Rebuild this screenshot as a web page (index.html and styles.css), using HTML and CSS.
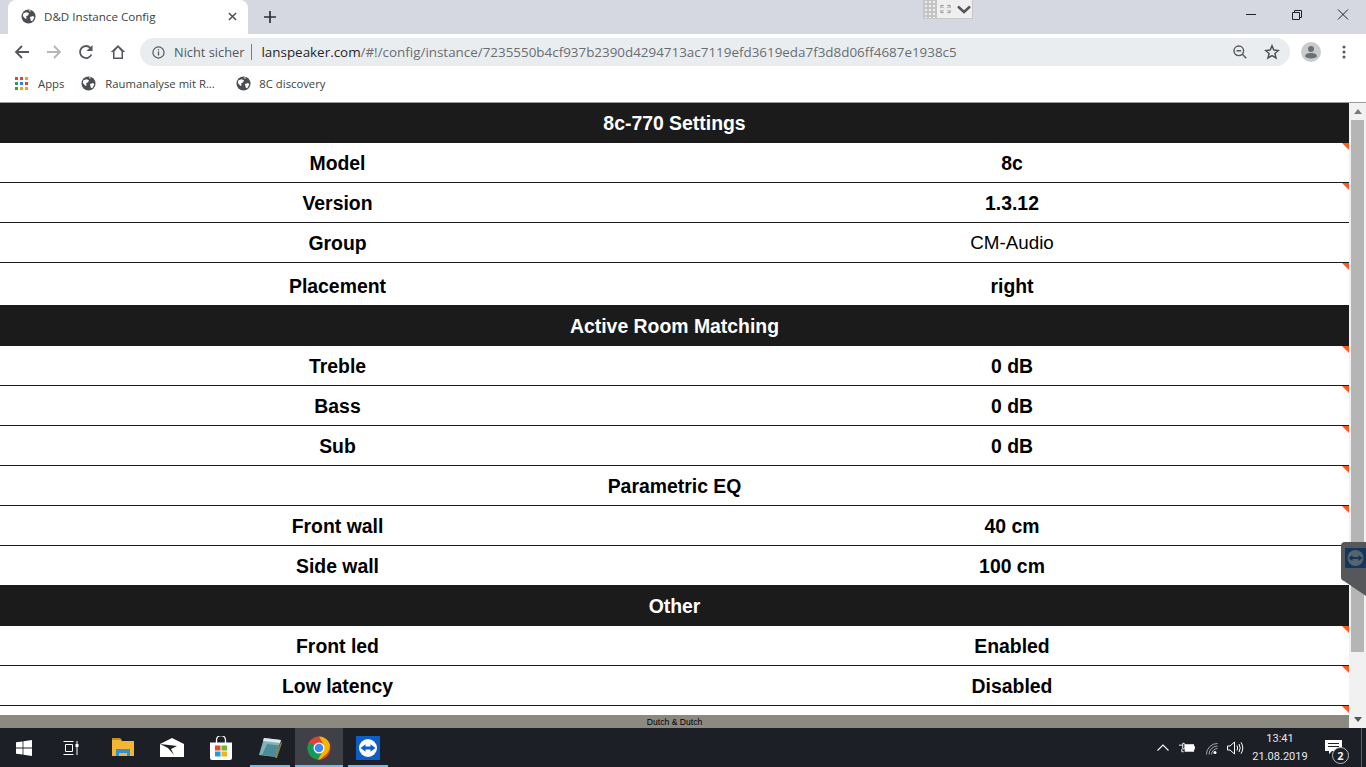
FILE: index.html
```html
<!DOCTYPE html>
<html lang="de">
<head>
<meta charset="utf-8">
<title>D&amp;D Instance Config</title>
<link rel="stylesheet" href="styles.css">
</head>
<body>
<svg class="defs" width="0" height="0">
  <symbol id="globe" viewBox="0 0 16 16">
    <circle cx="8" cy="8" r="7.5" fill="#4a4d52"/>
    <path d="M2.5 4.5 6 3.5l2.5 1-1 2.5-2 .5.5 2.5-1.5 .5-2.5-3zM9.5 8.5l3.5-1 1.2 1.5-2.2 4-1.500-.5zM8 1.200l3 .6-1.500 1.200z" fill="#fff"/>
  </symbol>
</svg>

<header class="browser">
  <div class="tabstrip">
    <div class="tab">
      <svg class="ico16"><use href="#globe"/></svg>
      <span class="tab-title">D&amp;D Instance Config</span>
      <svg class="tab-close" viewBox="0 0 10 10"><path d="M1 1l8 8M9 1l-8 8" stroke="#4a4d52" stroke-width="1.600"/></svg>
    </div>
    <svg class="tab-new" viewBox="0 0 12 12"><path d="M6 0v12M0 6h12" stroke="#2e3034" stroke-width="1.700"/></svg>
    <div class="win-btns">
      <svg class="win-btn" viewBox="0 0 46 30"><path d="M18 14.500h10" stroke="#222" fill="none"/></svg>
      <svg class="win-btn" viewBox="0 0 46 30"><path d="M18.500 12.500h7v7h-7zM20.500 12.500v-2h7v7h-2" stroke="#222" fill="none"/></svg>
      <svg class="win-btn" viewBox="0 0 46 30"><path d="M18 9.500l10 10M28 9.500l-10 10" stroke="#222" fill="none"/></svg>
    </div>
  </div>

  <div class="toolbar">
    <svg class="nav" viewBox="0 0 16 16"><path d="M15 8H2M8 2 2 8l6 6" stroke="#54575c" stroke-width="1.800" fill="none"/></svg>
    <svg class="nav" viewBox="0 0 16 16"><path d="M1 8h13M8 2l6 6-6 6" stroke="#b3b5b8" stroke-width="1.800" fill="none"/></svg>
    <svg class="nav" viewBox="0 0 16 16"><path d="M13.500 10.500A6 6 0 1 1 12.500 4" stroke="#54575c" stroke-width="1.800" fill="none"/><path d="M14.500 1v6h-6z" fill="#54575c"/></svg>
    <svg class="nav" viewBox="0 0 16 16"><path d="M8 1 .8 8H3v7h10V8h2.200zM4.500 7.500 8 3.500l3.500 4v6h-7z" fill="#54575c" fill-rule="evenodd"/></svg>
    <div class="omnibox">
      <svg class="info" viewBox="0 0 14 14"><circle cx="7" cy="7" r="6" stroke="#54575c" stroke-width="1.300" fill="none"/><path d="M7 6v4.200M7 3.500v1.400" stroke="#54575c" stroke-width="1.400"/></svg>
      <span class="not-secure">Nicht sicher</span>
      <span class="sep"></span>
      <span class="url"><b class="host">lanspeaker.com</b>/#!/config/instance/7235550b4cf937b2390d4294713ac7119efd3619eda7f3d8d06ff4687e1938c5</span>
      <svg class="zoom-ico" viewBox="0 0 14 14"><circle cx="5.800" cy="5.800" r="4.800" stroke="#54575c" stroke-width="1.400" fill="none"/><path d="M9.300 9.300l4 4M3.500 5.800h4.600" stroke="#54575c" stroke-width="1.400"/></svg>
      <svg class="star" viewBox="0 0 16 16"><path d="M8 1.800l1.800 4.300 4.600.4-3.500 3 1.100 4.500L8 11.600 4 14l1.100-4.500-3.500-3 4.600-.4z" stroke="#4d5055" stroke-width="1.500" fill="none"/></svg>
    </div>
    <svg class="avatar" viewBox="0 0 20 20"><circle cx="10" cy="10" r="10" fill="#c9cbce"/><circle cx="10" cy="7" r="3" fill="#6b6e72"/><path d="M4 14.500c0-2.500 3-3.500 6-3.500s6 1 6 3.500c-1.500 1.300-3.500 2-6 2s-4.500-.7-6-2z" fill="#6b6e72"/></svg>
    <svg class="menu" viewBox="0 0 4 14"><circle cx="2" cy="2" r="1.500" fill="#54575c"/><circle cx="2" cy="7" r="1.500" fill="#54575c"/><circle cx="2" cy="12" r="1.500" fill="#54575c"/></svg>
  </div>

  <nav class="bookmarks">
    <svg class="apps" viewBox="0 0 13 13">
      <rect width="3" height="3" fill="#e0452f"/><rect x="5" width="3" height="3" fill="#e0452f"/><rect x="10" width="3" height="3" fill="#f4a400"/>
      <rect y="5" width="3" height="3" fill="#2f9e4a"/><rect x="5" y="5" width="3" height="3" fill="#3b78e7"/><rect x="10" y="5" width="3" height="3" fill="#e0452f"/>
      <rect y="10" width="3" height="3" fill="#2f9e4a"/><rect x="5" y="10" width="3" height="3" fill="#f4a400"/><rect x="10" y="10" width="3" height="3" fill="#f4a400"/>
    </svg>
    <span class="bm-apps">Apps</span>
    <svg class="ico15 bm-g1"><use href="#globe"/></svg>
    <span class="bm-text bm-t1">Raumanalyse mit R...</span>
    <svg class="ico15 bm-g2"><use href="#globe"/></svg>
    <span class="bm-text bm-t2">8C discovery</span>
  </nav>
</header>

<div class="remote-tab">
  <div class="remote-grid"></div>
  <svg class="remote-expand" viewBox="0 0 12 10"><path d="M1 4V1h3M8 1h3v3M1 6v3h3M8 9h3V6M2 2l2 2M10 2 8 4M2 8l2-2M10 8 8 6" stroke="#777" fill="none" stroke-width=".8"/></svg>
  <svg class="remote-chev" viewBox="0 0 14 9"><path d="M1 1.500l6 5.500 6-5.500" stroke="#555" stroke-width="2.400" fill="none"/></svg>
</div>

<div class="viewport">
  <main class="page">
    <div class="row head head-first">8c-770 Settings</div>
    <div class="row line mark"><span>Model</span><span>8c</span></div>
    <div class="row line mark"><span>Version</span><span>1.3.12</span></div>
    <div class="row line row-plain"><span>Group</span><span class="plain">CM-Audio</span></div>
    <div class="row tall mark"><span>Placement</span><span>right</span></div>
    <div class="row head head-tall">Active Room Matching</div>
    <div class="row line mark"><span>Treble</span><span>0 dB</span></div>
    <div class="row line mark"><span>Bass</span><span>0 dB</span></div>
    <div class="row line mark"><span>Sub</span><span>0 dB</span></div>
    <div class="row line mark span-row">Parametric EQ</div>
    <div class="row line mark"><span>Front wall</span><span>40 cm</span></div>
    <div class="row short mark"><span>Side wall</span><span>100 cm</span></div>
    <div class="row head head-tall">Other</div>
    <div class="row line mark"><span>Front led</span><span>Enabled</span></div>
    <div class="row line mark"><span>Low latency</span><span>Disabled</span></div>
    <div class="row line mark"><span></span><span></span></div>
  </main>

  <aside class="scrollbar">
    <span class="arrow-up"></span>
    <span class="thumb"></span>
    <span class="arrow-down"></span>
  </aside>

  <footer class="page-footer"><span>Dutch &amp; Dutch</span></footer>

  <div class="tv-handle">
    <svg viewBox="0 0 25 54" width="25" height="54">
      <path d="M25 0H4Q0 0 0 4v31q0 3 3 4l22 15z" fill="#56575a"/>
      <rect x="4" y="6" width="21" height="20" rx="1" fill="#12365c"/>
      <circle cx="14.500" cy="16" r="8" fill="#56646f"/>
      <path d="M7.500 16l4-3v2h6v-2l4 3-4 3v-2h-6v2z" fill="#12365c"/>
    </svg>
  </div>
</div>

<footer class="taskbar">
  <svg class="tb-start" viewBox="0 0 16 16"><path d="M0 2.300 6.600 1.400v6.200H0zM7.400 1.300 16 0v7.600H7.400zM0 8.400h6.600v6.200L0 13.700zM7.400 8.400H16V16l-8.600-1.300z" fill="#fff"/></svg>
  <svg class="tb-view" viewBox="0 0 16 16"><path d="M.5 1.500h10M.5 14.500h10M2.500 4.500h7v7h-7zM14 1v14" stroke="#fff" fill="none"/><rect x="12.500" y="4" width="3" height="3" fill="#fff"/></svg>
  <div class="tb-app">
    <svg viewBox="0 0 22 19" width="22" height="19"><path d="M0 1h8l2 2h12v15H0z" fill="#f2b632"/><path d="M0 0h8l2 2H0z" fill="#c98f1a"/><path d="M4 18v-7h14v7h-3v-3H7v3z" fill="#2f8fd8"/></svg>
  </div>
  <div class="tb-app">
    <svg viewBox="0 0 24 19" width="24" height="19"><path d="M0 6 12 0l12 6v13H0z" fill="#fff"/><path d="M0 6l17 2-6 3 3 6-6-7z" fill="#1c1f26"/></svg>
  </div>
  <div class="tb-app">
    <svg viewBox="0 0 24 24" width="24" height="24"><path d="M7.500 7V4a4.500 4.500 0 0 1 9 0v3" stroke="#fff" fill="none" stroke-width="1.300"/><path d="M1 6.500h22V22a2 2 0 0 1-2 2H3a2 2 0 0 1-2-2z" fill="#fff"/><rect x="6" y="9.500" width="5.500" height="5" fill="#e8492b"/><rect x="12.500" y="9.500" width="5.500" height="5" fill="#6fb52e"/><rect x="6" y="15.500" width="5.500" height="5" fill="#1f9be0"/><rect x="12.500" y="15.500" width="5.500" height="5" fill="#f6b21b"/></svg>
  </div>
  <div class="tb-app under">
    <svg viewBox="0 0 24 22" width="24" height="22"><path d="M6 1l17 2-5 17-17-2z" fill="#7fb3b8"/><path d="M6 1l17 2-1 3L5 4z" fill="#dfe8ea"/><path d="M9 7l12 1.500-3.500 11L4 18z" fill="#4d8c96"/><path d="M23 5l1 1-5 15-2 0z" fill="#9a7a3a"/></svg>
  </div>
  <div class="tb-app active under">
    <svg viewBox="0 0 24 24" width="24" height="24"><circle cx="12" cy="12" r="11.500" fill="#db4437"/><path d="M12 12 2 6.500A11.500 11.500 0 0 0 11 23.500l5-8z" fill="#0f9d58"/><path d="M12 .5h0A11.500 11.500 0 0 1 23 8.500l-1 6-2 3-7 6-2 0 6-10.500-1-5.500z" fill="#f4b400"/><circle cx="12" cy="12" r="5.500" fill="#fff"/><circle cx="12" cy="12" r="4.300" fill="#4285f4"/></svg>
  </div>
  <div class="tb-app under">
    <svg viewBox="0 0 24 24" width="24" height="24"><rect width="24" height="24" fill="#0d5fc7"/><circle cx="12" cy="12" r="9" fill="#fff"/><path d="M4.500 12l5-3.800V10.500h5V8.200l5 3.800-5 3.800V13.500h-5v2.300z" fill="#0d5fc7"/></svg>
  </div>
  <div class="tray">
    <svg class="tr-up" viewBox="0 0 12 7"><path d="M.5 6.500 6 1l5.500 5.500" stroke="#fff" fill="none" stroke-width="1.100"/></svg>
    <svg class="tr-batt" viewBox="0 0 17 11"><path d="M0 3h4M4 1v6h1.500q1-1 1-3t-1-3zM3 7v3h2" stroke="#fff" fill="none"/><rect x="6" y="2" width="10" height="8" fill="#fff"/><rect x="16" y="4" width="1" height="3.500" fill="#fff"/></svg>
    <svg class="tr-wifi" viewBox="0 0 14 14"><path d="M.5 13.500A13 13 0 0 1 13.500.5M3.500 13.500A10 10 0 0 1 13.500 3.500M6.500 13.500A7 7 0 0 1 13.500 6.500" stroke="#bfc0c3" fill="none"/><circle cx="10.500" cy="11" r="1.800" fill="#fff"/></svg>
    <svg class="tr-vol" viewBox="0 0 17 14"><path d="M.5 5h2.500L7.500 1v12L3 9H.5zM10 4.500q1.300 2.500 0 5M12 3q2.400 4 0 8M14 1.300q3.600 5.700 0 11.400" stroke="#fff" fill="none"/></svg>
    <div class="clock"><span>13:41</span><span>21.08.2019</span></div>
    <div class="notify">
      <svg viewBox="0 0 17 15" width="17" height="15"><path d="M0 0h17v11H7l-3 3v-3H0z" fill="#fff"/><path d="M3 3.500h11M3 6.500h11" stroke="#1c1f26"/></svg>
      <span class="badge">2</span>
    </div>
    <span class="show-desktop"></span>
  </div>
</footer>
</body>
</html>
```

FILE: styles.css
```css
* { box-sizing: border-box; }
html, body { margin: 0; padding: 0; height: 767px; overflow: hidden; }
body { display: flex; flex-direction: column; background: #fff; font-family: "Liberation Sans", Arial, sans-serif; position: relative; }
.defs { position: absolute; }
svg { display: block; flex: none; }

/* browser chrome */
.browser { flex: none; height: 103px; border-bottom: 1px solid #9a9a9a; font-family: "Open Sans", "Noto Sans", sans-serif; color: #3c3f43; }
.tabstrip { height: 34px; background: #d5d8e0; display: flex; align-items: center; padding-left: 8px; }
.tab { width: 240px; height: 34px; background: #fff; border-radius: 8px 8px 0 0; display: flex; align-items: center; padding: 0 0 1px 13px; }
.ico16 { width: 15px; height: 15px; }
.ico15 { width: 15px; height: 15px; }
.tab-title { margin-left: 8px; font-size: 11.600px; width: 183px; white-space: nowrap; }
.tab-close { width: 9px; height: 9px; margin-left: 1px; }
.tab-new { width: 12px; height: 12px; margin-left: 16px; }
.win-btns { margin-left: auto; display: flex; align-self: flex-start; }
.win-btn { width: 46px; height: 30px; }

.toolbar { height: 34px; background: #fff; display: flex; align-items: center; padding: 2px 0 0 14px; }
.nav { width: 16px; height: 16px; margin-right: 16px; }
.omnibox { width: 1150px; height: 28px; margin-left: -2px; border-radius: 14px; background: #e9edf0; display: flex; align-items: center; padding-left: 12px; }
.info { width: 13px; height: 13px; }
.not-secure { margin-left: 9px; font-size: 12.800px; color: #54575c; white-space: nowrap; }
.sep { width: 1px; height: 16px; background: #7a7d80; margin: 0 9px 0 7px; }
.url { font-size: 13.410px; color: #6a6d70; white-space: nowrap; width: 960px; }
.host { font-weight: 400; color: #24272b; }
.zoom-ico { width: 14px; height: 14px; margin-left: 12px; }
.star { width: 16px; height: 16px; margin-left: 17px; }
.avatar { width: 20px; height: 20px; margin-left: 11px; }
.menu { width: 4px; height: 14px; margin-left: 21px; }

.bookmarks { height: 34px; background: #fff; display: flex; align-items: center; padding: 0 0 4px 15px; font-size: 11.300px; color: #3c3f43; }
.apps { width: 13px; height: 13px; }
.bm-apps { margin-left: 10px; }
.bm-g1 { margin-left: 17px; }
.bm-g2 { margin-left: 20px; }
.bm-text { margin-left: 9px; white-space: nowrap; }
.bm-t1 { width: 111px; }
.bm-t2 { margin-left: 8px; }

/* remote control widget */
.remote-tab { position: absolute; left: 923px; top: 0; width: 50px; height: 19px; background: #efefef; border: 1px solid #c8c8c8; border-top: 0; display: flex; align-items: center; }
.remote-grid { width: 13px; height: 18px; background-color: #c4c4c4; background-image: radial-gradient(#efefef 1.200px, transparent 1.300px); background-size: 4px 4px; }
.remote-expand { width: 11px; height: 10px; margin-left: 3px; }
.remote-chev { width: 14px; height: 9px; margin-left: 6px; }

/* page */
.viewport { flex: none; height: 625px; position: relative; display: flex; overflow: hidden; }
.page { width: 1349px; flex: none; color: #000; font-size: 19.400px; font-weight: 700; }
.row { display: grid; grid-template-columns: 675px 674px; align-items: center; justify-items: center; height: 40px; padding-top: 2px; position: relative; white-space: nowrap; }
.line { border-bottom: 1px solid #1b1b1b; }
.tall { height: 42px; padding-top: 4px; }
.short { height: 39px; }
.head { background: #1b1b1b; color: #fff; display: flex; justify-content: center; }
.head-first { padding-top: 0; }
.head-tall { height: 41px; }
.span-row { display: flex; justify-content: center; }
.plain { font-weight: 400; font-size: 18.800px; margin-top: -2px; }
.mark::after { content: ""; position: absolute; top: 0; right: 0; width: 0; height: 0; border-top: 7px solid #ff5a1f; border-left: 7px solid transparent; }

.scrollbar { width: 17px; flex: none; background: #f1f1f1; display: flex; flex-direction: column; align-items: center; }
.arrow-up { margin-top: 6px; width: 0; height: 0; border: 4px solid transparent; border-top: 0; border-bottom: 5px solid #7a7a7a; }
.thumb { width: 13px; height: 532px; margin-top: 6px; background: #b5b5b5; }
.arrow-down { margin-top: auto; margin-bottom: 6px; width: 0; height: 0; border: 4px solid transparent; border-bottom: 0; border-top: 5px solid #555; }

.page-footer { position: absolute; left: 0; bottom: 0; width: 1349px; height: 13px; background: #8c8980; display: flex; justify-content: center; align-items: center; font-size: 8.600px; color: #000; }
.tv-handle { position: absolute; right: 0; top: 439px; width: 25px; height: 54px; }

/* taskbar */
.taskbar { flex: none; height: 39px; background: #1c1f26; display: flex; align-items: center; padding-left: 16px; }
.tb-start { width: 16px; height: 16px; }
.tb-view { width: 16px; height: 16px; margin-left: 31px; margin-right: 20px; }
.tb-app { width: 48px; height: 39px; display: flex; align-items: center; justify-content: center; position: relative; margin-right: 1px; }
.tb-app.under::after { content: ""; position: absolute; left: 4px; right: 4px; bottom: 0; height: 2px; background: #76b9ed; }
.tb-app.active { background: #3f4147; }
.tb-app.active::after { left: 0; right: 0; }
.tray { margin-left: auto; display: flex; align-items: center; color: #e8e8e8; height: 39px; }
.tr-up { width: 12px; height: 7px; }
.tr-batt { width: 16px; height: 11px; margin-left: 10px; }
.tr-wifi { width: 12px; height: 12px; margin-left: 11px; margin-top: 3px; }
.tr-vol { width: 17px; height: 14px; margin-left: 9px; }
.clock { display: flex; flex-direction: column; align-items: center; font-family: Roboto, "Open Sans", sans-serif; font-size: 11px; line-height: 18px; margin-left: 8px; width: 56px; }
.notify { width: 44px; height: 39px; position: relative; display: flex; align-items: center; padding-left: 15px; margin-left: 2px; }
.badge { position: absolute; left: 22px; top: 19px; width: 17px; height: 17px; border-radius: 50%; background: #1c1f26; border: 1px solid #bbb; color: #eee; font: 700 11px/15px "Open Sans", sans-serif; text-align: center; }
.show-desktop { width: 1px; height: 39px; background: #5b5e63; margin: 0 4px 0 7px; }
```
